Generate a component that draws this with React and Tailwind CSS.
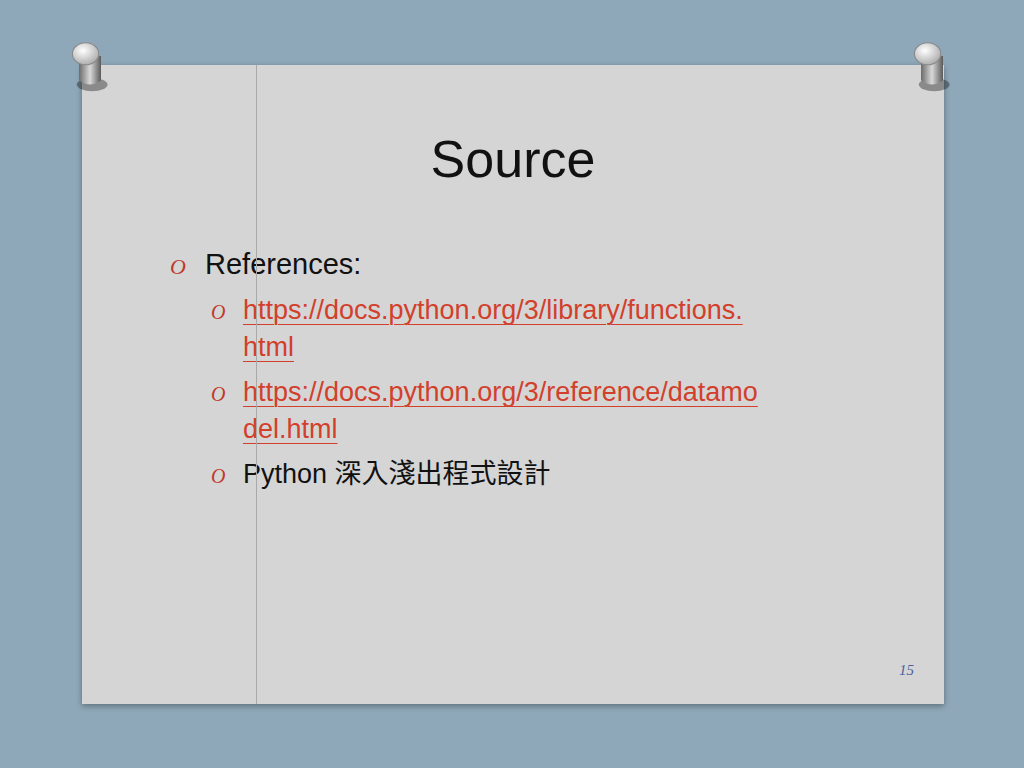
import React from 'react'

function Pin({ className }) {
  return (
    <svg className={className} width="44" height="54" viewBox="0 0 40 48">
      <defs>
        <linearGradient id="pg" x1="0" x2="1">
          <stop offset="0" stopColor="#6b6b6b" />
          <stop offset="0.5" stopColor="#d8d8d8" />
          <stop offset="1" stopColor="#5a5a5a" />
        </linearGradient>
        <radialGradient id="ph" cx="0.4" cy="0.35" r="0.7">
          <stop offset="0" stopColor="#ffffff" />
          <stop offset="1" stopColor="#a9a9a9" />
        </radialGradient>
      </defs>
      <ellipse cx="22" cy="40" rx="14" ry="6" fill="#000" opacity="0.35" />
      <path d="M10 14 L10 36 Q20 44 30 36 L30 14 Z" fill="url(#pg)" />
      <ellipse cx="16" cy="12" rx="12" ry="10" fill="url(#ph)" stroke="#888" strokeWidth="1" />
    </svg>
  )
}

function Bullet({ small }) {
  return (
    <span className={`italic text-[#c0392b] font-[Liberation_Serif,serif] ${small ? 'text-[20px] w-[32px]' : 'text-[22px] w-[35px]'} shrink-0`}>
      O
    </span>
  )
}

export default function App() {
  const link = 'text-[#d2402c] underline decoration-1 underline-offset-[5px]'
  return (
    <div className="w-[1024px] h-[768px] bg-[#8fa8b9] relative overflow-hidden font-[Liberation_Sans,Noto_Sans_CJK_TC,sans-serif]">
      <div className="absolute left-[82px] top-[65px] w-[862px] h-[639px] bg-[#d5d5d5] shadow-[0_2px_6px_rgba(0,0,0,0.35)]">
        <div className="absolute left-[174px] top-0 bottom-0 w-px bg-[#a9a9a9]" />
        <div className="text-center text-[52px] text-[#111] pt-[62px] leading-[64px]">Source</div>
        <div className="pl-[88px] pt-[54px] text-[#111]">
          <div className="flex items-baseline text-[29px] leading-[38px]">
            <Bullet />
            <span>References:</span>
          </div>
          <div className="pl-[41px] text-[27px] leading-[37px] mt-[6px]">
            <div className="flex items-baseline">
              <Bullet small />
              <span className={link}>https://docs.python.org/3/library/functions.<br />html</span>
            </div>
            <div className="flex items-baseline mt-[8px]">
              <Bullet small />
              <span className={link}>https://docs.python.org/3/reference/datamo<br />del.html</span>
            </div>
            <div className="flex items-baseline mt-[8px]">
              <Bullet small />
              <span>Python 深入淺出程式設計</span>
            </div>
          </div>
        </div>
        <div className="absolute right-[30px] top-[594px] italic text-[15px] text-[#4a5fa0] font-[Liberation_Serif,serif]">15</div>
      </div>
      <Pin className="absolute left-[68px] top-[40px]" />
      <Pin className="absolute left-[910px] top-[40px]" />
    </div>
  )
}
